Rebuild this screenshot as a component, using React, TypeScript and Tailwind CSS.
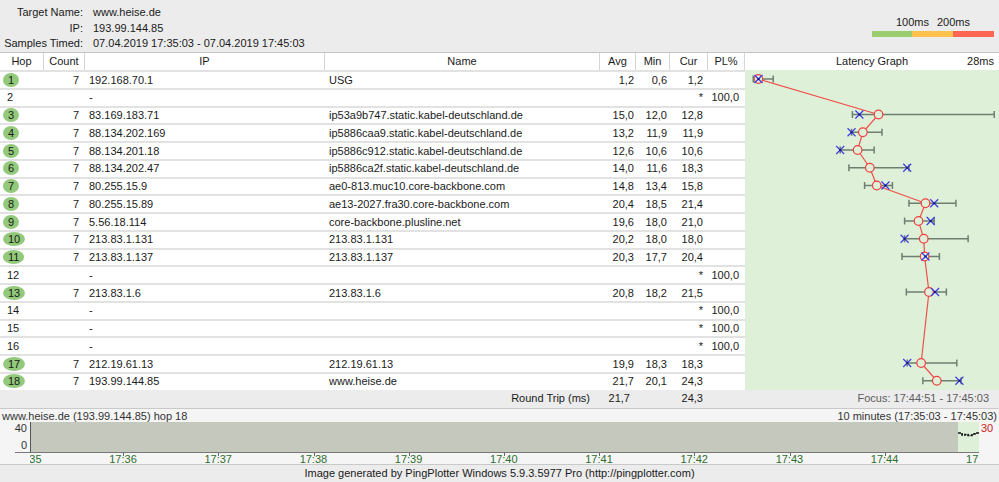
import React from 'react'

type Hop = {
  hop: number
  count?: number
  ip: string
  name?: string
  avg?: number
  min?: number
  cur?: number
  max?: number
  pl?: string
}

const hops: Hop[] = [
  { hop: 1, count: 7, ip: '192.168.70.1', name: 'USG', avg: 1.2, min: 0.6, cur: 1.2, max: 2.9 },
  { hop: 2, ip: '-', pl: '100,0' },
  { hop: 3, count: 7, ip: '83.169.183.71', name: 'ip53a9b747.static.kabel-deutschland.de', avg: 15.0, min: 12.0, cur: 12.8, max: 28.3 },
  { hop: 4, count: 7, ip: '88.134.202.169', name: 'ip5886caa9.static.kabel-deutschland.de', avg: 13.2, min: 11.9, cur: 11.9, max: 15.4 },
  { hop: 5, count: 7, ip: '88.134.201.18', name: 'ip5886c912.static.kabel-deutschland.de', avg: 12.6, min: 10.6, cur: 10.6, max: 14.5 },
  { hop: 6, count: 7, ip: '88.134.202.47', name: 'ip5886ca2f.static.kabel-deutschland.de', avg: 14.0, min: 11.6, cur: 18.3, max: 18.5 },
  { hop: 7, count: 7, ip: '80.255.15.9', name: 'ae0-813.muc10.core-backbone.com', avg: 14.8, min: 13.4, cur: 15.8, max: 16.6 },
  { hop: 8, count: 7, ip: '80.255.15.89', name: 'ae13-2027.fra30.core-backbone.com', avg: 20.4, min: 18.5, cur: 21.4, max: 23.9 },
  { hop: 9, count: 7, ip: '5.56.18.114', name: 'core-backbone.plusline.net', avg: 19.6, min: 18.0, cur: 21.0, max: 21.4 },
  { hop: 10, count: 7, ip: '213.83.1.131', name: '213.83.1.131', avg: 20.2, min: 18.0, cur: 18.0, max: 25.3 },
  { hop: 11, count: 7, ip: '213.83.1.137', name: '213.83.1.137', avg: 20.3, min: 17.7, cur: 20.4, max: 22.0 },
  { hop: 12, ip: '-', pl: '100,0' },
  { hop: 13, count: 7, ip: '213.83.1.6', name: '213.83.1.6', avg: 20.8, min: 18.2, cur: 21.5, max: 22.8 },
  { hop: 14, ip: '-', pl: '100,0' },
  { hop: 15, ip: '-', pl: '100,0' },
  { hop: 16, ip: '-', pl: '100,0' },
  { hop: 17, count: 7, ip: '212.19.61.13', name: '212.19.61.13', avg: 19.9, min: 18.3, cur: 18.3, max: 24.0 },
  { hop: 18, count: 7, ip: '193.99.144.85', name: 'www.heise.de', avg: 21.7, min: 20.1, cur: 24.3, max: 24.5 },
]

const fmt = (n?: number) => (n == null ? '' : n.toFixed(1).replace('.', ','))

const ROW = 17.75
const gx = (ms: number) => 3 + ms * 8.7
const gy = (i: number) => i * ROW + 9

const timeLabels = ['17:35', '17:36', '17:37', '17:38', '17:39', '17:40', '17:41', '17:42', '17:43', '17:44', '17:45']

function HopRow({ h }: { h: Hop }) {
  const lost = h.count == null
  return (
    <div className="flex h-[17.75px] items-center border-t-2 border-[#e2e2e2] bg-white">
      <div className="w-[44px]">
        {lost ? (
          <span className="pl-[7px]">{h.hop}</span>
        ) : (
          <span className="ml-[3px] inline-block h-[14px] rounded-[50%] bg-[#93c97a] px-[5px] leading-[14px]">{h.hop}</span>
        )}
      </div>
      <div className="w-[41px] pr-[6px] text-right">{h.count}</div>
      <div className="w-[240px] pl-[4px]">{h.ip}</div>
      <div className="w-[275px] pl-[4px]">{h.name}</div>
      <div className="w-[36px] pr-[2px] text-right">{fmt(h.avg)}</div>
      <div className="w-[34px] pr-[3px] text-right">{fmt(h.min)}</div>
      <div className="w-[38px] pr-[5px] text-right">{lost ? '*' : fmt(h.cur)}</div>
      <div className="w-[37px] pr-[6px] text-right">{h.pl}</div>
    </div>
  )
}

function LatencyGraph() {
  const pts = hops
    .map((h, i) => ({ h, i }))
    .filter(({ h }) => h.avg != null)
  return (
    <svg width={254} height={ROW * hops.length} className="block">
      {pts.map(({ h, i }) => {
        const y = gy(i)
        const a = gx(h.min!)
        const b = gx(h.max!)
        return (
          <g key={`b${i}`} stroke="#6f7f6f" strokeWidth={1.5}>
            <line x1={a} x2={b} y1={y} y2={y} />
            <line x1={a} x2={a} y1={y - 3.5} y2={y + 3.5} />
            <line x1={b} x2={b} y1={y - 3.5} y2={y + 3.5} />
          </g>
        )
      })}
      <polyline
        points={pts.map(({ h, i }) => `${gx(h.avg!)},${gy(i)}`).join(' ')}
        fill="none"
        stroke="#f0504a"
        strokeWidth={1.2}
      />
      {pts.map(({ h, i }) => (
        <circle key={`c${i}`} cx={gx(h.avg!)} cy={gy(i)} r={4.3} fill="#dff0d8" stroke="#ee4040" strokeWidth={1.2} />
      ))}
      {pts.map(({ h, i }) => {
        const x = gx(h.cur!)
        const y = gy(i)
        return (
          <g key={`x${i}`}>
            <g stroke="#3b3be6" strokeWidth={1.2}>
              <line x1={x - 4} y1={y - 4} x2={x + 4} y2={y + 4} />
              <line x1={x - 4} y1={y + 4} x2={x + 4} y2={y - 4} />
            </g>
            <rect x={x - 1} y={y - 1} width={2} height={2} fill="#1c1c80" />
          </g>
        )
      })}
    </svg>
  )
}

export default function App() {
  return (
    <div className="h-[482px] w-[999px] overflow-hidden bg-[#ececec] font-['Liberation_Sans',Arial,sans-serif] text-[11px] text-[#1a1a1a]">
      {/* summary */}
      <div className="flex h-[52px] justify-between">
        <div className="grid grid-cols-[83px_auto] content-start pt-[5px] leading-[15.5px]">
          <span className="text-right">Target Name:</span>
          <span className="pl-[10px]">www.heise.de</span>
          <span className="text-right">IP:</span>
          <span className="pl-[10px]">193.99.144.85</span>
          <span className="text-right">Samples Timed:</span>
          <span className="pl-[10px]">07.04.2019 17:35:03 - 07.04.2019 17:45:03</span>
        </div>
        <div className="mr-[5px] mt-[16px] w-[122px]">
          <div className="flex pl-[20px] leading-[12px]">
            <span className="w-[41px] text-center">100ms</span>
            <span className="w-[41px] text-center">200ms</span>
          </div>
          <div className="mt-[3px] flex h-[6px]">
            <div className="w-[40px] bg-[#9bcc6e]" />
            <div className="w-[41px] bg-[#ffc24f]" />
            <div className="w-[41px] bg-[#ff6553]" />
          </div>
        </div>
      </div>

      {/* column header */}
      <div className="flex h-[18px] items-center border-t border-[#c4c4c4] bg-white">
        <div className="w-[44px] border-r border-[#d6d6d6] text-center">Hop</div>
        <div className="w-[41px] border-r border-[#d6d6d6] text-center">Count</div>
        <div className="w-[240px] border-r border-[#d6d6d6] text-center">IP</div>
        <div className="w-[275px] border-r border-[#d6d6d6] text-center">Name</div>
        <div className="w-[36px] border-r border-[#d6d6d6] text-center">Avg</div>
        <div className="w-[34px] border-r border-[#d6d6d6] text-center">Min</div>
        <div className="w-[38px] border-r border-[#d6d6d6] text-center">Cur</div>
        <div className="w-[37px] border-r border-[#d6d6d6] text-center">PL%</div>
        <div className="grid flex-1 grid-cols-[1fr_auto_1fr]">
          <span />
          <span>Latency Graph</span>
          <span className="pr-[5px] text-right">28ms</span>
        </div>
      </div>

      {/* hops */}
      <div className="flex">
        <div className="w-[745px]">
          {hops.map((h) => (
            <HopRow key={h.hop} h={h} />
          ))}
        </div>
        <div className="w-[254px] bg-[#dff0d8]">
          <LatencyGraph />
        </div>
      </div>

      {/* round trip */}
      <div className="flex h-[18px] items-center">
        <div className="w-[600px] pr-[10px] text-right">Round Trip (ms)</div>
        <div className="w-[36px] pr-[6px] text-right">21,7</div>
        <div className="w-[34px]" />
        <div className="w-[38px] pr-[5px] text-right">24,3</div>
        <div className="flex-1 pr-[10px] text-right text-[#5c5c5c]">Focus: 17:44:51 - 17:45:03</div>
      </div>

      {/* time graph */}
      <div className="h-[56px] border-t border-[#c9c9c9] bg-[#f5f5f5]">
        <div className="flex h-[13px] items-end justify-between px-[2px] leading-[12px] text-[#333]">
          <span>www.heise.de (193.99.144.85) hop 18</span>
          <span>10 minutes (17:35:03 - 17:45:03)</span>
        </div>
        <div className="flex h-[30px]">
          <div className="relative w-[30px] text-[#333]">
            <span className="absolute right-[3px] top-[1px] leading-[11px]">40</span>
            <span className="absolute right-[3px] top-[18px] leading-[11px]">0</span>
          </div>
          <div className="w-px bg-[#555]" />
          <div className="w-[927px] bg-[#c5c9bd]" />
          <div className="w-[21px] bg-[#dff0d8]">
            <svg width={21} height={30} className="block">
              <polyline
                points="0,11 4,11 4,13 7,13 7,12.5 10,12.5 10,13.5 14,13.5 14,12 17,12 17,11 21,11"
                fill="none"
                stroke="#111"
                strokeWidth={1.6}
                strokeDasharray="3 1"
              />
            </svg>
          </div>
          <div className="pl-[2px] pt-[1px] leading-[11px] text-[#cc2020]">30</div>
        </div>
        <div className="ml-[15px] h-px w-[964px] bg-[#777]" />
        <div className="relative ml-[30px] h-[11px] w-[949px] overflow-hidden leading-[12px] text-[#2d6e2d]">
          {timeLabels.map((t, k) => (
            <React.Fragment key={t}>
              <span className="absolute top-0 h-[3px] w-px bg-[#666]" style={{ left: -2 + 95.2 * k }} />
              <span className="absolute top-0 -translate-x-1/2" style={{ left: -2.2 + 95.2 * k }}>
                {t}
              </span>
            </React.Fragment>
          ))}
        </div>
      </div>

      {/* footer */}
      <div className="flex h-[18px] items-center justify-center border-t border-[#c9c9c9]">
        Image generated by PingPlotter Windows 5.9.3.5977 Pro (http://pingplotter.com)
      </div>
    </div>
  )
}
